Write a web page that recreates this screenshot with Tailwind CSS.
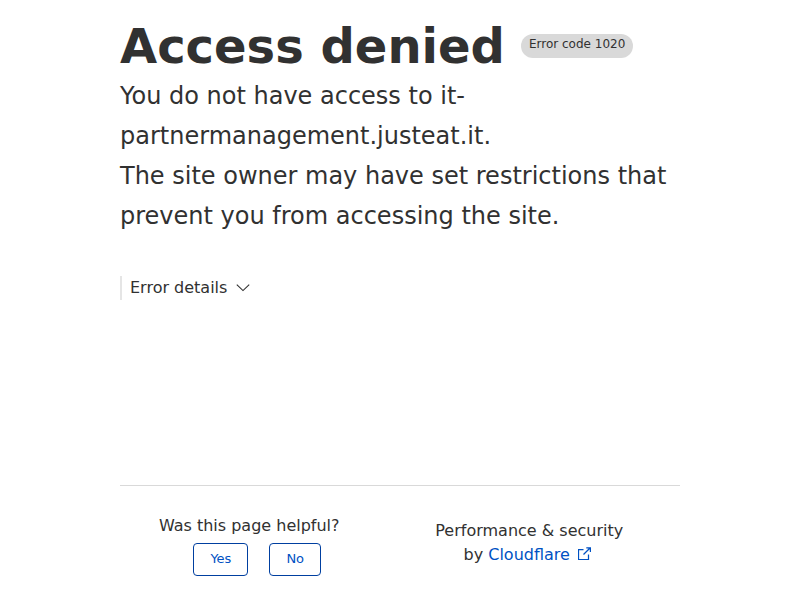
<!DOCTYPE html>
<html lang="en">
<head>
<meta charset="utf-8">
<meta name="viewport" content="width=device-width, initial-scale=1">
<title>Access denied</title>
<script src="https://cdn.jsdelivr.net/npm/@tailwindcss/browser@4"></script>
</head>
<body class="bg-white font-['DejaVu_Sans',sans-serif] text-base text-[#313131]">
<div class="mx-auto flex min-h-screen w-7/10 flex-col">
  <main class="flex-1 pt-4">
    <header class="flex items-center gap-4">
      <h1 class="text-[48px] leading-[60px] font-bold">Access denied</h1>
      <span class="rounded-full bg-[#d9d9d9] px-2 pt-px pb-[5px] text-xs leading-[18px]">Error code 1020</span>
    </header>
    <p class="text-2xl leading-10">You do not have access to it-partnermanagement.justeat.it.<br>The site owner may have set restrictions that prevent you from accessing the site.</p>
    <button type="button" class="mt-10 flex items-center gap-2 border-l-2 border-[#e5e5e5] pl-2 leading-6">
      Error details
      <svg class="h-4 w-4" viewBox="0 0 16 16" fill="none" stroke="#313131" stroke-width="1.1" aria-hidden="true"><path d="M1.8 4.6L8 10.6l6.2-6"/></svg>
    </button>
  </main>
  <footer class="grid grid-cols-[6fr_7fr] items-start border-t border-[#d9d9d9] pt-7 pb-6">
    <div class="text-center">
      <p id="helpful" class="leading-6">Was this page helpful?</p>
      <div class="mt-[5px] flex justify-center gap-[21px] pl-4" role="group" aria-labelledby="helpful">
        <button type="button" class="rounded-sm border border-[#003fa0] px-4 pt-[3px] pb-1 text-[13px] leading-6 text-[#0051c3]">Yes</button>
        <button type="button" class="rounded-sm border border-[#003fa0] px-4 pt-[3px] pb-1 text-[13px] leading-6 text-[#0051c3]">No</button>
      </div>
    </div>
    <p class="pt-[5px] text-center leading-6">Performance &amp; security<br>by <a href="https://www.cloudflare.com/" class="text-[#0051c3]">Cloudflare<svg class="mr-1 ml-2 inline h-[13px] w-[13px] align-baseline" viewBox="0 0 13 13" fill="none" stroke="currentColor" stroke-width="1.25" aria-hidden="true"><path d="M5.5 2.5h-5v10h10v-5M5.5 7.5l6.8-6.8M8.3.8h4.1v4.1"/></svg></a></p>
  </footer>
</div>
</body>
</html>
